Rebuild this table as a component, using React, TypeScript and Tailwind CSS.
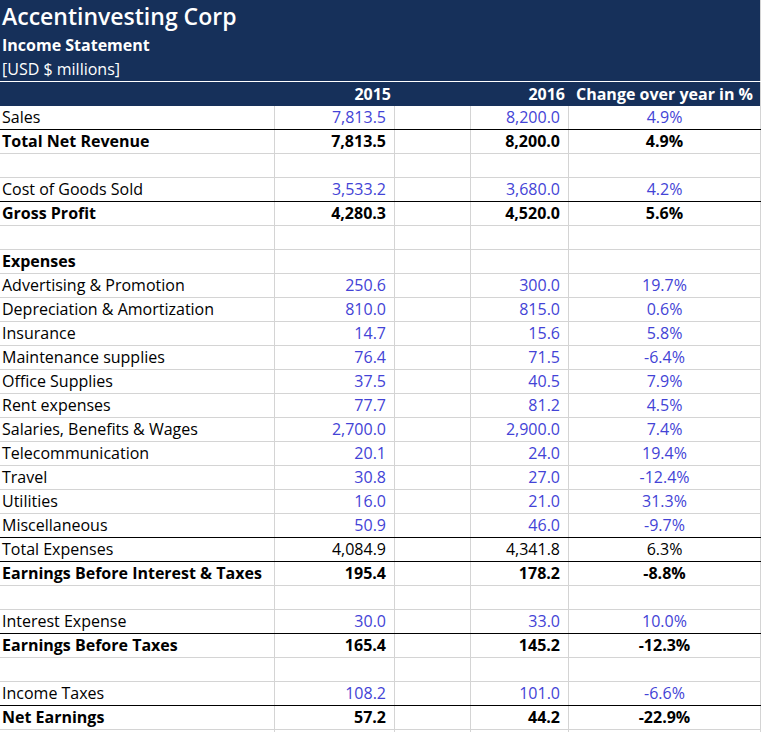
import React from "react";

type Row = {
  label?: string;
  y15?: string;
  y16?: string;
  pct?: string;
  bold?: boolean;
  blue?: boolean;
  lineAbove?: boolean;
};

const rows: Row[] = [
  { label: "Sales", y15: "7,813.5", y16: "8,200.0", pct: "4.9%", blue: true },
  { label: "Total Net Revenue", y15: "7,813.5", y16: "8,200.0", pct: "4.9%", bold: true, lineAbove: true },
  {},
  { label: "Cost of Goods Sold", y15: "3,533.2", y16: "3,680.0", pct: "4.2%", blue: true },
  { label: "Gross Profit", y15: "4,280.3", y16: "4,520.0", pct: "5.6%", bold: true, lineAbove: true },
  {},
  { label: "Expenses", bold: true },
  { label: "Advertising & Promotion", y15: "250.6", y16: "300.0", pct: "19.7%", blue: true },
  { label: "Depreciation & Amortization", y15: "810.0", y16: "815.0", pct: "0.6%", blue: true },
  { label: "Insurance", y15: "14.7", y16: "15.6", pct: "5.8%", blue: true },
  { label: "Maintenance supplies", y15: "76.4", y16: "71.5", pct: "-6.4%", blue: true },
  { label: "Office Supplies", y15: "37.5", y16: "40.5", pct: "7.9%", blue: true },
  { label: "Rent expenses", y15: "77.7", y16: "81.2", pct: "4.5%", blue: true },
  { label: "Salaries, Benefits & Wages", y15: "2,700.0", y16: "2,900.0", pct: "7.4%", blue: true },
  { label: "Telecommunication", y15: "20.1", y16: "24.0", pct: "19.4%", blue: true },
  { label: "Travel", y15: "30.8", y16: "27.0", pct: "-12.4%", blue: true },
  { label: "Utilities", y15: "16.0", y16: "21.0", pct: "31.3%", blue: true },
  { label: "Miscellaneous", y15: "50.9", y16: "46.0", pct: "-9.7%", blue: true },
  { label: "Total Expenses", y15: "4,084.9", y16: "4,341.8", pct: "6.3%", lineAbove: true },
  { label: "Earnings Before Interest & Taxes", y15: "195.4", y16: "178.2", pct: "-8.8%", bold: true, lineAbove: true },
  {},
  { label: "Interest Expense", y15: "30.0", y16: "33.0", pct: "10.0%", blue: true },
  { label: "Earnings Before Taxes", y15: "165.4", y16: "145.2", pct: "-12.3%", bold: true, lineAbove: true },
  {},
  { label: "Income Taxes", y15: "108.2", y16: "101.0", pct: "-6.6%", blue: true },
  { label: "Net Earnings", y15: "57.2", y16: "44.2", pct: "-22.9%", bold: true, lineAbove: true },
  {},
];

const cols = "grid grid-cols-[275px_120px_76px_98px_192px]";

export default function App() {
  return (
    <div className="w-[761px] bg-white font-['Open_Sans',sans-serif] text-[16px] text-black">
      <div className="bg-[#16305a] text-white h-[81px] pl-[2px] border-r border-[#d4d4d4]">
        <div className="h-[33px] flex items-center text-[23px] font-semibold leading-[30px] pb-[2px]">Accentinvesting Corp</div>
        <div className="h-[24px] flex items-end text-[16px] font-bold leading-[22px] pb-px">Income Statement</div>
        <div className="h-[24px] flex items-end text-[16px] leading-[22px] pb-px">[USD $ millions]</div>
      </div>
      <div className="h-px bg-white" />
      <div className={`${cols} h-[24px] bg-[#16305a] text-white font-bold leading-[22px] items-center`}>
        <div />
        <div className="text-right pr-[4px]">2015</div>
        <div />
        <div className="text-right pr-[4px]">2016</div>
        <div className="text-center border-r border-[#d4d4d4] h-full flex items-center justify-center">Change over year in %</div>
      </div>
      {rows.map((r, i) => {
        const next = rows[i + 1];
        const bottom = next && next.lineAbove ? "border-b-black" : "border-b-[#d4d4d4]";
        const num = r.blue ? "text-[#4343d6]" : "text-black";
        const weight = r.bold ? "font-bold" : "font-normal";
        return (
          <div key={i} className={`${cols} h-[24px] border-b ${bottom} leading-[22px] ${weight}`}>
            <div className="border-r border-[#d4d4d4] pl-[2px] pb-px flex items-end whitespace-nowrap">{r.label}</div>
            <div className={`border-r border-[#d4d4d4] pr-[8px] pb-px flex items-end justify-end ${num}`}>{r.y15}</div>
            <div className="border-r border-[#d4d4d4]" />
            <div className={`border-r border-[#d4d4d4] pr-[8px] pb-px flex items-end justify-end ${num}`}>{r.y16}</div>
            <div className={`border-r border-[#d4d4d4] pb-px flex items-end justify-center ${num}`}>{r.pct}</div>
          </div>
        );
      })}
    </div>
  );
}
